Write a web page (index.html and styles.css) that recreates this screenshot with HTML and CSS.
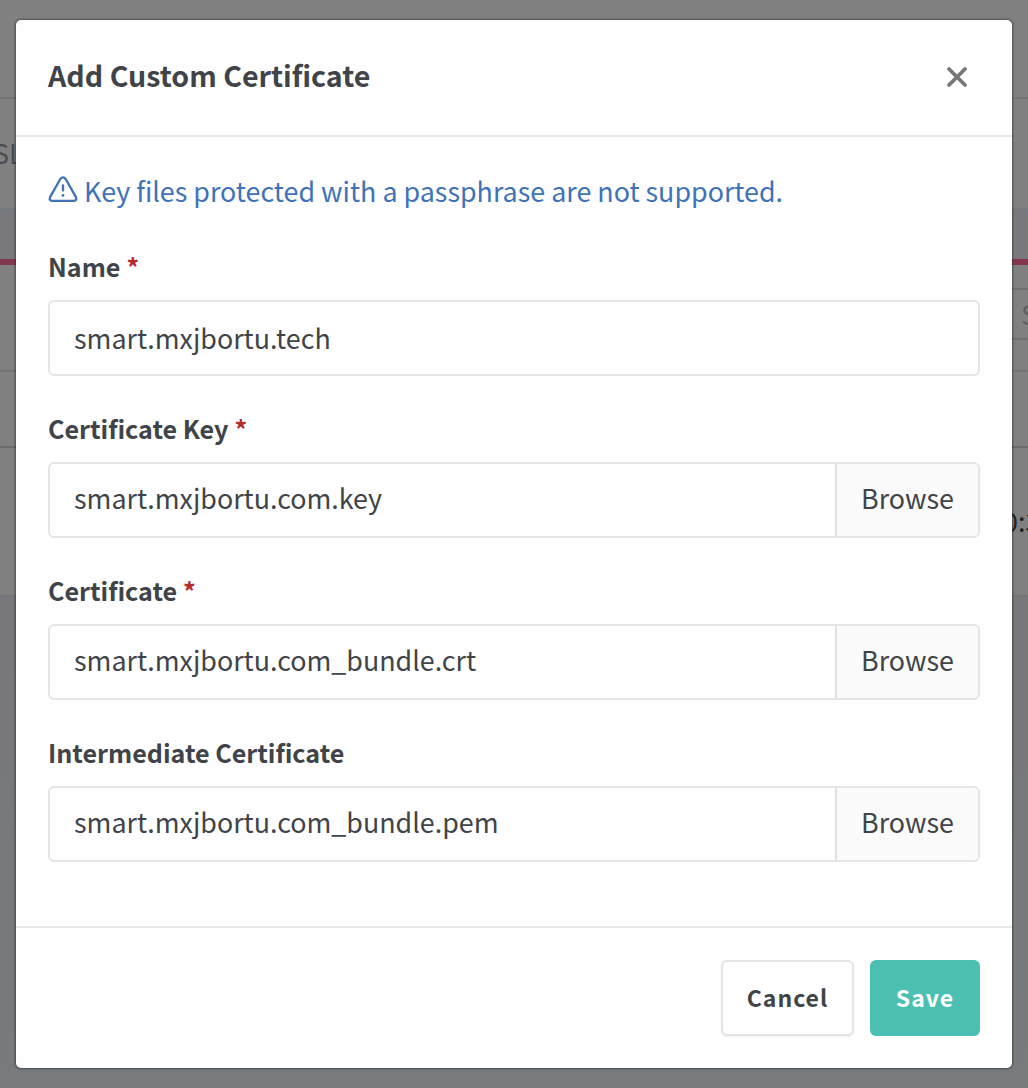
FILE: index.html
```
<!DOCTYPE html>
<html lang="en">
<head>
<meta charset="utf-8">
<title>Add Custom Certificate</title>
<link rel="stylesheet" href="styles.css">
</head>
<body>
<div class="page" aria-hidden="true">
  <div class="band band-top"></div>
  <div class="band band-heading"><span>SL</span></div>
  <div class="band band-gap"></div>
  <div class="band band-search"><span class="search">S</span></div>
  <div class="band band-columns"></div>
  <div class="band band-row"><span>0:3</span></div>
  <div class="band band-rest"></div>
</div>
<div class="modal" role="dialog" aria-labelledby="title">
  <header class="modal-header">
    <h1 class="title" id="title">Add Custom Certificate</h1>
    <button class="close" aria-label="Close">
      <svg width="22" height="22" viewBox="0 0 22 22" fill="none" stroke="currentColor" stroke-width="3.8" stroke-linecap="round"><path d="M3 3 19 19M19 3 3 19"/></svg>
    </button>
  </header>
  <div class="modal-body">
    <p class="note">
      <svg class="note-icon" width="30" height="28" viewBox="0 0 30 28" fill="none" stroke="currentColor" stroke-width="2.3" stroke-linecap="round" stroke-linejoin="round"><path d="M12.2 3.2 2.2 20.9Q.6 24.7 4.2 24.9H25.8Q29.4 24.7 27.8 20.9L17.8 3.2Q15 -.4 12.2 3.2Z"/><path d="M15 9.3v5.2"/><circle cx="15" cy="19.4" r="1.4" fill="currentColor" stroke="none"/></svg>
      <span>Key files protected with a passphrase are not supported.</span>
    </p>
    <div class="field">
      <div class="label"><span>Name</span><span class="required">*</span></div>
      <div class="control"><span class="value value-text">smart.mxjbortu.tech</span></div>
    </div>
    <div class="field">
      <div class="label"><span>Certificate Key</span><span class="required">*</span></div>
      <div class="control"><span class="value">smart.mxjbortu.com.key</span><button class="browse">Browse</button></div>
    </div>
    <div class="field">
      <div class="label"><span>Certificate</span><span class="required">*</span></div>
      <div class="control"><span class="value">smart.mxjbortu.com_bundle.crt</span><button class="browse">Browse</button></div>
    </div>
    <div class="field">
      <div class="label"><span>Intermediate Certificate</span></div>
      <div class="control"><span class="value">smart.mxjbortu.com_bundle.pem</span><button class="browse">Browse</button></div>
    </div>
  </div>
  <footer class="modal-footer">
    <button class="button cancel">Cancel</button>
    <button class="button save">Save</button>
  </footer>
</div>
</body>
</html>
```
FILE: styles.css
```
* { box-sizing: border-box; }

body {
  margin: 0;
  height: 1088px;
  position: relative;
  overflow: hidden;
  background: #7b7d80;
  color: #404449;
  font-family: "Noto Sans CJK SC", "Noto Sans", sans-serif;
  font-size: 26.85px;
}

button { font: inherit; color: inherit; border: 0; padding: 0; }

.page { display: flex; flex-direction: column; height: 1088px; color: #4b4c51; }
.band { border-bottom: 2px solid #747474; background: #808080; flex: none; }
.band-top { height: 99px; }
.band-heading { height: 111px; padding-top: 34px; line-height: 40px; border-color: #74797d; }
.band-heading span { margin-left: -7px; }
.band-gap { height: 55px; background: #79797d; border-bottom: 6px solid #84364d; }
.band-search { height: 107px; padding: 23px 0 0 1000px; }
.search { display: block; height: 52px; border: 2px solid #707070; border-right: 0; padding-left: 19px; line-height: 48px; color: #606060; }
.band-columns { height: 76px; border-color: #6c6c6c; }
.band-row { height: 149px; padding: 53px 0 0 1003px; line-height: 40px; color: #222; white-space: nowrap; overflow: hidden; }
.band-rest { flex: 1; border: 0; background: linear-gradient(#78777c, #777b7d); }

.modal {
  position: absolute;
  inset: 20px 16px 20px 16px;
  display: flex;
  flex-direction: column;
  background: #fefefe;
  border-radius: 5px;
  box-shadow: 0 0 2px 1px rgba(40, 40, 40, .6);
}

.modal-header {
  height: 117px;
  padding: 0 44px 2px 32px;
  border-bottom: 2px solid #e8e8e8;
  display: flex;
  align-items: center;
  justify-content: space-between;
}
.title { margin: 0; padding-bottom: 4px; font-size: 28.6px; line-height: 40px; font-weight: 700; }
.close { display: flex; background: none; color: #777; }

.modal-body { flex: 1; padding: 34px 32px 0; }
.note { display: flex; align-items: center; gap: 6px; height: 40px; margin: 0 0 37px; line-height: 40px; color: #3f72b7; white-space: nowrap; }
.note-icon { flex: none; margin-bottom: 3px; }

.field { height: 162px; }
.label { display: flex; gap: 6px; height: 52px; line-height: 36px; font-size: 25.1px; font-weight: 700; }
.required { color: #b42b2b; }
.control { display: flex; height: 76px; border: 2px solid #e4e5e6; border-radius: 6px; overflow: hidden; line-height: 68px; }
.value { flex: 1; padding-left: 24px; }
.value-text { padding-top: 2px; }
.browse { width: 143px; padding-bottom: 4px; border-left: 2px solid #e0e1e2; background: #fafafa; }

.modal-footer { height: 142px; border-top: 2px solid #e8e8e8; padding: 32px; display: flex; justify-content: flex-end; gap: 16px; }
.button { height: 76px; padding-bottom: 3px; border-radius: 6px; font-size: 23px; font-weight: 700; letter-spacing: 1px; }
.cancel { width: 133px; background: #fefefe; border: 2px solid #e4e4e6; box-shadow: 0 1px 2px rgba(0, 0, 0, .06); }
.save { width: 110px; background: #4bbfb1; color: #fff; }
```
